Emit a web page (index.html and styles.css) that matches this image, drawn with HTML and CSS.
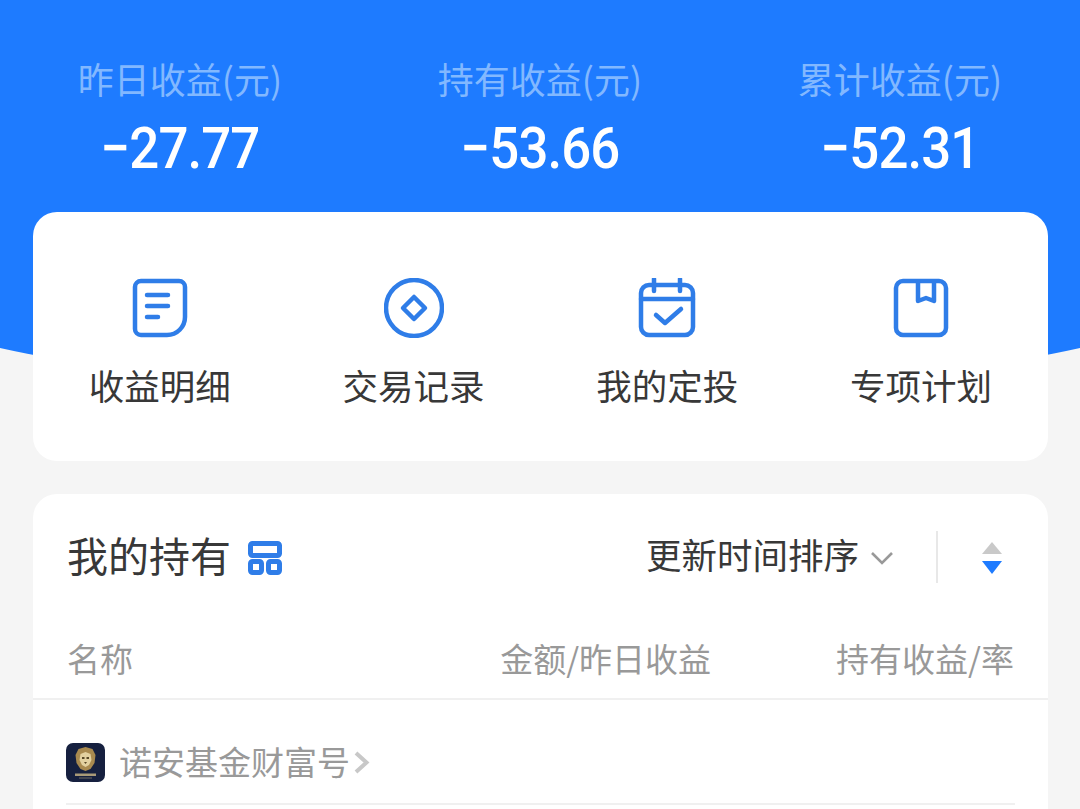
FILE: index.html
```html
<!DOCTYPE html>
<html lang="zh-CN">
<head>
  <meta charset="UTF-8">
  <meta name="viewport" content="width=device-width, initial-scale=1">
  <title>我的持有</title>
  <link rel="stylesheet" href="styles.css">
</head>
<body>
  <div class="page">
    <div class="hero-bg"></div>

    <div class="stats">
      <div class="stat">
        <div class="stat-label">昨日收益(元)</div>
        <div class="stat-value">−27.77</div>
      </div>
      <div class="stat">
        <div class="stat-label">持有收益(元)</div>
        <div class="stat-value">−53.66</div>
      </div>
      <div class="stat">
        <div class="stat-label">累计收益(元)</div>
        <div class="stat-value">−52.31</div>
      </div>
    </div>

    <div class="card actions">
      <div class="action">
        <svg class="action-icon" viewBox="0 0 60 60" fill="none" stroke="#2f7de8" stroke-width="4.500" stroke-linecap="round" stroke-linejoin="round">
          <path d="M11 3h38a6 6 0 0 1 6 6v30a18 18 0 0 1-18 18H11a6 6 0 0 1-6-6V9a6 6 0 0 1 6-6z"/>
          <path d="M17 17h21M17 28h21M17 39h11"/>
        </svg>
        <span>收益明细</span>
      </div>
      <div class="action">
        <svg class="action-icon" viewBox="0 0 60 60" fill="none" stroke="#2f7de8" stroke-width="4.500" stroke-linejoin="round">
          <circle cx="30" cy="30" r="28"/>
          <path d="M30 19l11 11-11 11-11-11z"/>
        </svg>
        <span>交易记录</span>
      </div>
      <div class="action">
        <svg class="action-icon" viewBox="0 0 60 60" fill="none" stroke="#2f7de8" stroke-width="4.500" stroke-linecap="round" stroke-linejoin="round">
          <rect x="4" y="7" width="52" height="50" rx="8"/>
          <path d="M4 21h52M17 1v12M43 1v12"/>
          <path d="M19 37l9 8 16-14"/>
        </svg>
        <span>我的定投</span>
      </div>
      <div class="action">
        <svg class="action-icon" viewBox="0 0 60 60" fill="none" stroke="#2f7de8" stroke-width="4.500" stroke-linejoin="round">
          <rect x="5" y="3" width="50" height="54" rx="7"/>
          <path d="M27 3v20l8-3 8 3V3"/>
        </svg>
        <span>专项计划</span>
      </div>
    </div>

    <div class="card holdings">
      <div class="holdings-head">
        <div class="holdings-title">
          <span class="head-text">我的持有</span>
          <svg class="layout-icon" viewBox="0 0 34 34" fill="none" stroke="#2f7de8" stroke-width="5" stroke-linejoin="round">
            <rect x="2.500" y="2.500" width="29" height="12" rx="2"/>
            <rect x="2.500" y="20.500" width="11" height="11" rx="2"/>
            <rect x="20.500" y="20.500" width="11" height="11" rx="2"/>
          </svg>
        </div>
        <div class="sort">
          <span class="head-text">更新时间排序</span>
          <svg class="chevron" viewBox="0 0 24 14" fill="none" stroke="#999" stroke-width="2.600">
            <path d="M2 2l10 10L22 2"/>
          </svg>
          <div class="sort-line"></div>
          <svg class="sort-arrows" viewBox="0 0 22 34">
            <path d="M11 1l10 12H1z" fill="#c9c9c9"/>
            <path d="M1 20h20L11 33z" fill="#1e7bff"/>
          </svg>
        </div>
      </div>

      <div class="table-head">
        <span class="col-name">名称</span>
        <span class="col-amount">金额/昨日收益</span>
        <span class="col-rate">持有收益/率</span>
      </div>

      <div class="group-row">
        <svg class="logo" viewBox="0 0 39 39">
          <rect width="39" height="39" rx="7" fill="#16203f"/>
          <path d="M19.500 4l7 2 3 6-1 8-4 6-5 2-5-2-4-6-1-8 3-6z" fill="#a98a4f"/>
          <path d="M19.500 9l5 2 1 6-2.500 5-3.500 2-3.500-2-2.500-5 1-6z" fill="#e3d1a0"/>
          <path d="M16 14h2.500v2H16zM20.500 14H23v2h-2.500zM18 19h3l-1.500 2z" fill="#5b4a28"/>
          <path d="M9 30.500h21v2.500H9z" fill="#a99a78"/>
          <path d="M13 34.500h13v1H13z" fill="#6f6a62"/>
        </svg>
        <span class="group-name">诺安基金财富号</span>
        <svg class="group-arrow" viewBox="0 0 16 23" fill="none" stroke="#c8c8c8" stroke-width="4">
          <path d="M2 2l10.500 9.500L2 21"/>
        </svg>
      </div>
    </div>
  </div>
</body>
</html>
```

FILE: styles.css
```css
* {
  box-sizing: border-box;
}
html, body {
  margin: 0;
  height: 100%;
  overflow: hidden;
}
body {
  font-family: "Noto Sans CJK SC", "Noto Sans", sans-serif;
  background-color: #f5f5f5;
  color: #383838;
}
.page {
  position: relative;
  height: 809px;
  overflow: hidden;
  padding: 54px 32px 0 33px;
}
/* blue curved backdrop behind the stats and first card */
.hero-bg {
  position: absolute;
  left: -270px;
  top: 0;
  width: 1620px;
  height: 399px;
  border-radius: 0 0 810px 810px / 0 0 200px 200px;
  background-color: #1e7bff;
}
.stats {
  position: relative;
  display: grid;
  grid-template-columns: repeat(3, 360px);
  margin: 0 -32px 0 -33px;
  text-align: center;
}
.stat-label {
  font-size: 36px;
  line-height: 48px;
  color: #82b8ff;
}
.stat-value {
  margin-top: 13px;
  font-family: Roboto, sans-serif;
  font-size: 58px;
  font-weight: 500;
  line-height: 66px;
  letter-spacing: -1px;
  color: #fff;
  transform: scaleX(.91);
}
.card {
  position: relative;
  background-color: #fff;
  border-radius: 24px;
}
.actions {
  display: grid;
  grid-template-columns: repeat(4, 1fr);
  height: 249px;
  margin-top: 31px;
  padding-top: 66px;
}
.action {
  display: flex;
  flex-direction: column;
  align-items: center;
  font-size: 35.500px;
  line-height: 50px;
}
.action-icon {
  width: 60px;
  height: 60px;
  margin-bottom: 22px;
}
.holdings {
  height: 340px;
  margin-top: 33px;
}
.holdings-head {
  display: flex;
  align-items: center;
  justify-content: space-between;
  height: 90px;
  padding: 35px 45px 0 34px;
}
.holdings-title {
  display: flex;
  align-items: center;
  font-size: 41px;
}
.head-text {
  margin-bottom: 6px;
}
.layout-icon {
  width: 34px;
  height: 34px;
  margin: 2px 0 0 17px;
}
.sort {
  display: flex;
  align-items: center;
  font-size: 35.500px;
}
.chevron {
  width: 24px;
  height: 14px;
  margin: 2px 0 0 11px;
}
.sort-line {
  width: 2px;
  height: 52px;
  margin: 0 43px 0 42px;
  background-color: #e8e8e8;
}
.sort-arrows {
  width: 22px;
  height: 34px;
  margin-top: 2px;
}
.table-head {
  display: flex;
  align-items: center;
  height: 116px;
  padding: 34px 34px 0;
  border-bottom: 2px solid #f0f0f0;
  font-size: 33px;
  color: #999;
}
.col-name {
  flex: 1;
}
.col-amount {
  margin-right: 125px;
}
.group-row {
  display: flex;
  align-items: center;
  height: 105px;
  margin: 0 33px;
  padding-top: 22px;
  border-bottom: 2px solid #f0f0f0;
}
.logo {
  width: 39px;
  height: 39px;
}
.group-name {
  margin: 0 0 4px 14px;
  font-size: 33px;
  color: #999;
}
.group-arrow {
  width: 16px;
  height: 23px;
  margin-left: 4px;
}
```
